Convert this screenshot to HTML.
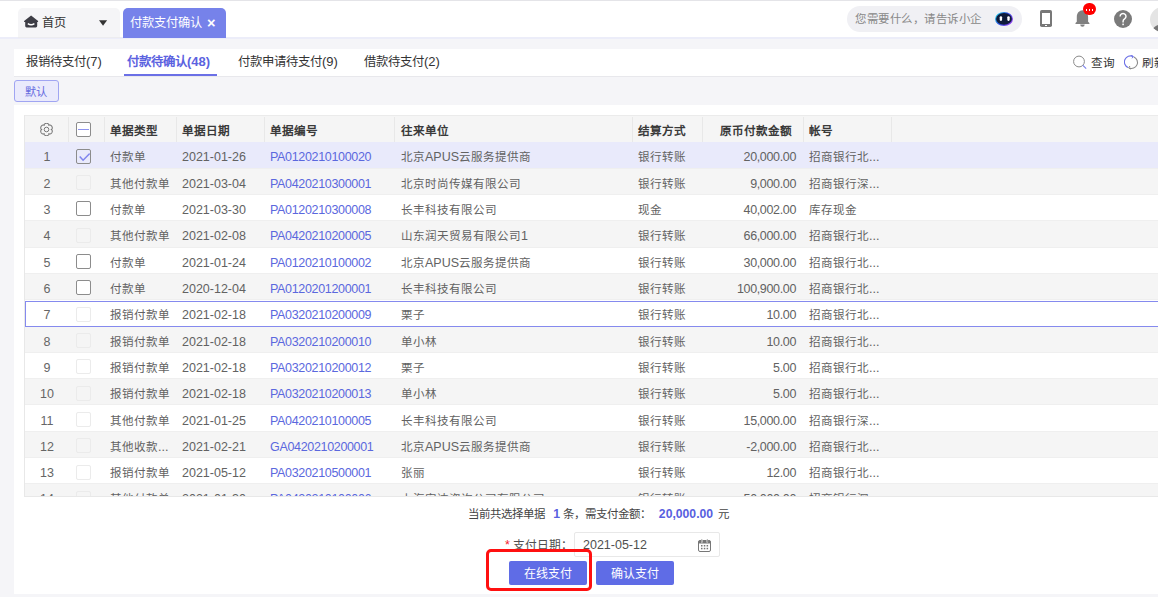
<!DOCTYPE html>
<html lang="zh-CN"><head><meta charset="utf-8">
<style>
*{box-sizing:border-box;margin:0;padding:0}
html,body{width:1158px;height:597px;overflow:hidden}
body{position:relative;background:#f5f5f8;font-family:"Liberation Sans",sans-serif;color:#333;font-size:12px}
i{font-style:normal;font-size:0.94em}
.row i{font-size:0.925em}
.th i{font-size:0.965em}
.st i{font-size:0.952em}
.abs{position:absolute}
#topline{left:0;top:0;width:1158px;height:1px;background:#e4e4e8}
#header{left:0;top:1px;width:1158px;height:37px;background:#fff}
#leftgap{left:0;top:38px;width:14px;height:559px;background:#f3f3f6}
.tab{top:8px;height:30px;border-radius:5px 5px 0 0;line-height:29px;font-size:13px;white-space:nowrap}
#tabhome{left:18px;width:102px;background:#f5f5f7;color:#333;border-bottom:1px solid #ececef}
#tabact{left:123px;width:103px;background:#7682ea;color:#fff}
#subtabs{left:14px;top:49px;width:1144px;height:28px;background:#fff;border-bottom:1px solid #e8e8ec}
.st{top:0;height:26px;line-height:26px;font-size:13px;color:#333;white-space:nowrap}
#deft{left:13.5px;top:80px;width:45.5px;height:21.5px;border:1px solid #a0a5f2;background:#eaeafc;border-radius:3px;color:#666be0;font-size:12px;line-height:20px;padding-top:1px;text-align:center}
#panel{left:14px;top:105px;width:1144px;height:489px;background:#fff}
#search{left:847px;top:6px;width:175px;height:26px;border-radius:13px;background:#f0f0f4;font-size:12.2px;letter-spacing:0.55px;color:#888;line-height:26px;padding-left:8px;white-space:nowrap}
#table{left:24px;top:115px;width:1134px;height:381.5px;overflow:hidden}
#thead{left:0;top:0;width:1134px;height:27.2px;background:#f5f5f5;border-top:1px solid #ebebeb}
.sep{top:1px;width:1px;height:25px;background:#e8e8e8}
.th{top:1.5px;height:27px;line-height:26px;font-weight:bold;color:#3a3a3a;white-space:nowrap}
.row{position:absolute;left:0;width:1200px;height:26.33px;background:#fff;border-bottom:1px solid #efefef;color:#626262;font-size:12.5px}
.row.alt{background:#f5f5f5}
.row.sel{background:#e9eafb}
.row span{position:absolute;top:2px;line-height:27px;white-space:nowrap}
.c0{left:0;width:46px;text-align:center;color:#666}
.row span.cb{left:52px;top:6.6px;width:15px;height:15px;border:1px solid #8c8c8c;border-radius:2px;background:#fff}
.row span.cb.dis{border-color:#ebebeb;background:transparent}
.row span.cb.checked{background:transparent}
.c2{left:86px}
.c3{left:158px}
.c4{left:246px;color:#5b68de;letter-spacing:-0.33px}
.c5{left:377px}
.c6{left:614px}
.c7{left:678px;width:94px;text-align:right;letter-spacing:-0.35px}
.c8{left:785px}
#summary{left:468px;top:505px;height:18px;line-height:18px;color:#444;white-space:nowrap;font-size:12.2px}
.blue{color:#5860e0;font-weight:bold}
#datelbl{left:505px;top:536px;line-height:18px;white-space:nowrap;color:#505050;font-size:12.5px}
#datein{left:574px;top:532px;width:146px;height:24.5px;border:1px solid #e8e8e8;border-radius:2px;line-height:24px;padding-left:8px;color:#505050;font-size:12.5px}
.btn{top:561px;width:78px;height:24px;background:#5f6ce6;border-radius:2px;color:#fff;text-align:center;line-height:25px;font-size:12.8px}
#redbox{left:486px;top:549px;width:106px;height:41.5px;border:3px solid #ff1010;border-radius:5px}
</style></head><body>
<div class="abs" id="topline"></div>
<div class="abs" id="header"></div>
<div class="abs" style="left:0;top:37px;width:1158px;height:2px;background:#ecedf9"></div>
<div class="abs tab" id="tabhome">
  <svg class="abs" style="left:6px;top:7px" width="15" height="13" viewBox="0 0 15 13"><path d="M7.1 0.4 L14.1 6.1 Q14.3 6.9 13.5 6.9 L13.2 6.9 L13.2 11 Q13.2 12.4 11.8 12.4 L2.6 12.4 Q1.2 12.4 1.2 11 L1.2 6.9 L0.7 6.9 Q-0.1 6.9 0.1 6.1 Z" fill="#3d3d45"/><path d="M3.8 8.6 Q7.1 10.9 10.4 8.6" stroke="#fff" stroke-width="1.3" fill="none"/></svg>
  <span class="abs" style="left:24px;top:0"><i>首页</i></span>
  <svg class="abs" style="left:81px;top:12px" width="9" height="6" viewBox="0 0 10 6"><path d="M0 0 L9 0 L4.5 6 Z" fill="#333"/></svg>
</div>
<div class="abs tab" id="tabact"><span class="abs" style="left:7px;top:0"><i>付款支付确认</i></span><span class="abs" style="left:84px;top:1px;font-size:14.5px;font-weight:bold">×</span></div>
<div class="abs" id="search"><i>您需要什么，请告诉小企</i></div>
<svg class="abs" style="left:994px;top:11px" width="20" height="16" viewBox="0 0 20 16"><defs><linearGradient id="rg" x1="0" y1="0.2" x2="1" y2="0.8"><stop offset="0" stop-color="#22d3e6"/><stop offset="0.45" stop-color="#2a4ee0"/><stop offset="1" stop-color="#9b3ef0"/></linearGradient></defs><ellipse cx="10" cy="8" rx="9.2" ry="7.2" fill="#fff" opacity="0.7"/><ellipse cx="10" cy="8" rx="9" ry="7" fill="url(#rg)"/><ellipse cx="10" cy="7.9" rx="7.9" ry="5.9" fill="#0e1a3a"/><rect x="5.7" y="5.2" width="2.4" height="4.7" rx="1.1" fill="#fff"/><rect x="13.3" y="5.2" width="2.4" height="4.7" rx="1.1" fill="#fff"/></svg>
<div class="abs" style="left:1040px;top:10px;width:12px;height:17px;background:#787878;border-radius:1.8px"><div class="abs" style="left:2px;top:3px;width:8px;height:11px;background:#fff"></div><div class="abs" style="left:5px;top:15px;width:2px;height:1px;background:#fff"></div></div>
<svg class="abs" style="left:1075px;top:9px" width="16" height="19" viewBox="0 0 16 19"><path d="M7.45 1.2 C4.5 1.6 1.8 3.5 1.8 8 L1.8 12.8 L0.5 14 L0.5 15.1 L14.4 15.1 L14.4 14 L13.1 12.8 L13.1 8 C13.1 3.5 10.4 1.6 7.45 1.2 Z" fill="#808080"/><path d="M5.2 15.4 L9.7 15.4 A2.25 2.3 0 0 1 5.2 15.4 Z" fill="#808080"/></svg>
<div class="abs" style="left:1083px;top:2.7px;width:12.8px;height:12.8px;border-radius:50%;background:#ff0000"></div>
<div class="abs" style="left:1085.5px;top:9px;width:1.6px;height:1.6px;background:#fff"></div>
<div class="abs" style="left:1088.5px;top:9px;width:1.6px;height:1.6px;background:#fff"></div>
<div class="abs" style="left:1091.5px;top:9px;width:1.6px;height:1.6px;background:#fff"></div>
<svg class="abs" style="left:1114px;top:9.6px" width="18" height="18" viewBox="0 0 18 18"><circle cx="9" cy="9" r="9" fill="#7a7a7a"/><path d="M6.1 6.4 A2.95 2.95 0 1 1 10.6 8.9 Q9.1 9.9 9.1 11.3 L9.1 12.6" fill="none" stroke="#fff" stroke-width="1.45"/><rect x="8.3" y="13.6" width="1.6" height="1.6" fill="#fff"/></svg>
<div class="abs" style="left:1150.4px;top:6.8px;width:25px;height:25px;border-radius:50%;background:#e4e4e4;overflow:hidden"><div class="abs" style="left:1px;top:16.8px;width:26px;height:18px;border-radius:50%;background:#767676"></div></div>
<div class="abs" id="subtabs">
  <div class="abs st" style="left:12px"><i>报销待支付</i>(7)</div>
  <div class="abs st" style="left:113px;color:#5b62e0;font-weight:bold"><i>付款待确认</i>(48)</div>
  <div class="abs" style="left:110px;top:25px;width:93px;height:2px;background:#6b70e6"></div>
  <div class="abs st" style="left:224px"><i>付款申请待支付</i>(9)</div>
  <div class="abs st" style="left:350px"><i>借款待支付</i>(2)</div>
</div>
<div class="abs" id="deft"><i>默认</i></div>
<div class="abs" id="panel"></div>
<div class="abs" id="table">
  <div class="abs" id="thead">
    <svg class="abs" style="left:16px;top:7px" width="13" height="13" viewBox="0 0 13 13"><path d="M6.50 0.30 L6.77 0.31 L7.04 0.35 L7.30 0.41 L7.56 0.50 L7.81 0.61 L8.04 0.74 L8.27 0.90 L8.47 1.09 L8.65 1.30 L8.81 1.55 L8.92 1.85 L8.85 2.43 L9.32 2.08 L9.63 2.02 L9.93 2.04 L10.20 2.09 L10.47 2.17 L10.72 2.28 L10.95 2.42 L11.17 2.58 L11.37 2.76 L11.56 2.96 L11.72 3.17 L11.87 3.40 L11.99 3.64 L12.10 3.89 L12.17 4.15 L12.23 4.42 L12.26 4.68 L12.26 4.96 L12.23 5.23 L12.17 5.50 L12.08 5.77 L11.94 6.02 L11.74 6.27 L11.20 6.50 L11.74 6.73 L11.94 6.98 L12.08 7.23 L12.17 7.50 L12.23 7.77 L12.26 8.04 L12.26 8.32 L12.23 8.58 L12.17 8.85 L12.10 9.11 L11.99 9.36 L11.87 9.60 L11.72 9.83 L11.56 10.04 L11.37 10.24 L11.17 10.42 L10.95 10.58 L10.72 10.72 L10.47 10.83 L10.20 10.91 L9.93 10.96 L9.63 10.98 L9.32 10.92 L8.85 10.57 L8.92 11.15 L8.81 11.45 L8.65 11.70 L8.47 11.91 L8.27 12.10 L8.04 12.26 L7.81 12.39 L7.56 12.50 L7.30 12.59 L7.04 12.65 L6.77 12.69 L6.50 12.70 L6.23 12.69 L5.96 12.65 L5.70 12.59 L5.44 12.50 L5.19 12.39 L4.96 12.26 L4.73 12.10 L4.53 11.91 L4.35 11.70 L4.19 11.45 L4.08 11.15 L4.15 10.57 L3.68 10.92 L3.37 10.98 L3.07 10.96 L2.80 10.91 L2.53 10.83 L2.28 10.72 L2.05 10.58 L1.83 10.42 L1.63 10.24 L1.44 10.04 L1.28 9.83 L1.13 9.60 L1.01 9.36 L0.90 9.11 L0.83 8.85 L0.77 8.58 L0.74 8.32 L0.74 8.04 L0.77 7.77 L0.83 7.50 L0.92 7.23 L1.06 6.98 L1.26 6.73 L1.80 6.50 L1.26 6.27 L1.06 6.02 L0.92 5.77 L0.83 5.50 L0.77 5.23 L0.74 4.96 L0.74 4.68 L0.77 4.42 L0.83 4.15 L0.90 3.89 L1.01 3.64 L1.13 3.40 L1.28 3.17 L1.44 2.96 L1.63 2.76 L1.83 2.58 L2.05 2.42 L2.28 2.28 L2.53 2.17 L2.80 2.09 L3.07 2.04 L3.37 2.02 L3.68 2.08 L4.15 2.43 L4.08 1.85 L4.19 1.55 L4.35 1.30 L4.53 1.09 L4.73 0.90 L4.96 0.74 L5.19 0.61 L5.44 0.50 L5.70 0.41 L5.96 0.35 L6.23 0.31 L6.50 0.30Z" fill="none" stroke="#777" stroke-width="1.05" stroke-linejoin="round"/><circle cx="6.5" cy="6.5" r="2.3" fill="none" stroke="#777" stroke-width="1"/></svg>
    <div class="abs sep" style="left:44px"></div>
    <div class="abs" style="left:52px;top:6px;width:15px;height:15px;border:1px solid #8c8c8c;border-radius:2px;background:#fff"><div class="abs" style="left:1px;top:5.5px;width:11px;height:1.6px;background:#8e93ef"></div></div>
    <div class="abs sep" style="left:79.6px"></div>
    <div class="abs th" style="left:86px"><i>单据类型</i></div>
    <div class="abs sep" style="left:151.6px"></div>
    <div class="abs th" style="left:158px"><i>单据日期</i></div>
    <div class="abs sep" style="left:239.7px"></div>
    <div class="abs th" style="left:246px"><i>单据编号</i></div>
    <div class="abs sep" style="left:370.4px"></div>
    <div class="abs th" style="left:377px"><i>往来单位</i></div>
    <div class="abs sep" style="left:607.5px"></div>
    <div class="abs th" style="left:614px"><i>结算方式</i></div>
    <div class="abs sep" style="left:677.6px"></div>
    <div class="abs th" style="left:678px;width:90px;text-align:right"><i>原币付款金额</i></div>
    <div class="abs sep" style="left:778.6px"></div>
    <div class="abs th" style="left:785px"><i>帐号</i></div>
    <div class="abs sep" style="left:866.7px"></div>
  </div>
<div class="row sel" style="top:27.20px"><span class="c0">1</span><span class="cb checked"><svg class="abs" style="left:1px;top:2px" width="12" height="10" viewBox="0 0 12 10"><path d="M1.7 4.4 L5.1 8.2 L11.7 1.6" fill="none" stroke="#7f85ee" stroke-width="1.5"/></svg></span><span class="c2"><i>付款单</i></span><span class="c3">2021-01-26</span><span class="c4">PA0120210100020</span><span class="c5"><i>北京</i>APUS<i>云服务提供商</i></span><span class="c6"><i>银行转账</i></span><span class="c7">20,000.00</span><span class="c8"><i>招商银行北</i>...</span></div>
<div class="row alt" style="top:53.53px"><span class="c0">2</span><span class="cb dis"></span><span class="c2"><i>其他付款单</i></span><span class="c3">2021-03-04</span><span class="c4">PA0420210300001</span><span class="c5"><i>北京时尚传媒有限公司</i></span><span class="c6"><i>银行转账</i></span><span class="c7">9,000.00</span><span class="c8"><i>招商银行深</i>...</span></div>
<div class="row" style="top:79.86px"><span class="c0">3</span><span class="cb en"></span><span class="c2"><i>付款单</i></span><span class="c3">2021-03-30</span><span class="c4">PA0120210300008</span><span class="c5"><i>长丰科技有限公司</i></span><span class="c6"><i>现金</i></span><span class="c7">40,002.00</span><span class="c8"><i>库存现金</i></span></div>
<div class="row alt" style="top:106.19px"><span class="c0">4</span><span class="cb dis"></span><span class="c2"><i>其他付款单</i></span><span class="c3">2021-02-08</span><span class="c4">PA0420210200005</span><span class="c5"><i>山东润天贸易有限公司</i>1</span><span class="c6"><i>银行转账</i></span><span class="c7">66,000.00</span><span class="c8"><i>招商银行北</i>...</span></div>
<div class="row" style="top:132.52px"><span class="c0">5</span><span class="cb en"></span><span class="c2"><i>付款单</i></span><span class="c3">2021-01-24</span><span class="c4">PA0120210100002</span><span class="c5"><i>北京</i>APUS<i>云服务提供商</i></span><span class="c6"><i>银行转账</i></span><span class="c7">30,000.00</span><span class="c8"><i>招商银行北</i>...</span></div>
<div class="row alt" style="top:158.85px"><span class="c0">6</span><span class="cb en"></span><span class="c2"><i>付款单</i></span><span class="c3">2020-12-04</span><span class="c4">PA0120201200001</span><span class="c5"><i>长丰科技有限公司</i></span><span class="c6"><i>银行转账</i></span><span class="c7">100,900.00</span><span class="c8"><i>招商银行北</i>...</span></div>
<div class="row hov" style="top:185.18px"><span class="c0">7</span><span class="cb dis"></span><span class="c2"><i>报销付款单</i></span><span class="c3">2021-02-18</span><span class="c4">PA0320210200009</span><span class="c5"><i>栗子</i></span><span class="c6"><i>银行转账</i></span><span class="c7">10.00</span><span class="c8"><i>招商银行北</i>...</span></div>
<div class="row alt" style="top:211.51px"><span class="c0">8</span><span class="cb dis"></span><span class="c2"><i>报销付款单</i></span><span class="c3">2021-02-18</span><span class="c4">PA0320210200010</span><span class="c5"><i>单小林</i></span><span class="c6"><i>银行转账</i></span><span class="c7">10.00</span><span class="c8"><i>招商银行北</i>...</span></div>
<div class="row" style="top:237.84px"><span class="c0">9</span><span class="cb dis"></span><span class="c2"><i>报销付款单</i></span><span class="c3">2021-02-18</span><span class="c4">PA0320210200012</span><span class="c5"><i>栗子</i></span><span class="c6"><i>银行转账</i></span><span class="c7">5.00</span><span class="c8"><i>招商银行北</i>...</span></div>
<div class="row alt" style="top:264.17px"><span class="c0">10</span><span class="cb dis"></span><span class="c2"><i>报销付款单</i></span><span class="c3">2021-02-18</span><span class="c4">PA0320210200013</span><span class="c5"><i>单小林</i></span><span class="c6"><i>银行转账</i></span><span class="c7">5.00</span><span class="c8"><i>招商银行北</i>...</span></div>
<div class="row" style="top:290.50px"><span class="c0">11</span><span class="cb dis"></span><span class="c2"><i>其他付款单</i></span><span class="c3">2021-01-25</span><span class="c4">PA0420210100005</span><span class="c5"><i>长丰科技有限公司</i></span><span class="c6"><i>银行转账</i></span><span class="c7">15,000.00</span><span class="c8"><i>招商银行深</i>...</span></div>
<div class="row alt" style="top:316.83px"><span class="c0">12</span><span class="cb dis"></span><span class="c2"><i>其他收款</i>...</span><span class="c3">2021-02-21</span><span class="c4">GA0420210200001</span><span class="c5"><i>北京</i>APUS<i>云服务提供商</i></span><span class="c6"><i>银行转账</i></span><span class="c7">-2,000.00</span><span class="c8"><i>招商银行北</i>...</span></div>
<div class="row" style="top:343.16px"><span class="c0">13</span><span class="cb dis"></span><span class="c2"><i>报销付款单</i></span><span class="c3">2021-05-12</span><span class="c4">PA0320210500001</span><span class="c5"><i>张丽</i></span><span class="c6"><i>银行转账</i></span><span class="c7">12.00</span><span class="c8"><i>招商银行北</i>...</span></div>
<div class="row alt" style="top:369.49px"><span class="c0">14</span><span class="cb dis"></span><span class="c2"><i>其他付款单</i></span><span class="c3">2021-01-30</span><span class="c4">PA0420210100006</span><span class="c5"><i>上海安达咨询公司有限公司</i></span><span class="c6"><i>银行转账</i></span><span class="c7">50,000.00</span><span class="c8"><i>招商银行深</i>...</span></div>
  <div class="abs" style="left:0;top:0;width:1px;height:381.5px;background:#e8e8e8"></div>
  <div class="abs" style="left:0;top:380.5px;width:1134px;height:1px;background:#e8e8e8"></div>
  <div class="abs" style="left:1px;top:186.2px;width:1200px;height:25.9px;border:1px solid #858aee"></div>
</div>
<div class="abs" id="summary"><i>当前共选择单据</i><span style="display:inline-block;width:8.2px"></span><span class="blue">1</span> <i>条，需支付金额：</i><span style="display:inline-block;width:7.5px"></span><span class="blue">20,000.00</span><span style="display:inline-block;width:5.4px"></span><i>元</i></div>
<div class="abs" id="datelbl"><span style="color:#f5222d">*</span> <i>支付日期：</i></div>
<div class="abs" id="datein">2021-05-12
  <svg class="abs" style="left:123px;top:6px" width="14" height="14" viewBox="0 0 14 14"><rect x="0.5" y="1.5" width="12" height="11" rx="1.5" fill="none" stroke="#777" stroke-width="1"/><rect x="0.5" y="1.5" width="12" height="3" rx="1" fill="#777"/><rect x="3" y="0" width="1.6" height="3.5" fill="#fff"/><rect x="8.5" y="0" width="1.6" height="3.5" fill="#fff"/><rect x="3.3" y="0.3" width="1" height="3" fill="#888"/><rect x="8.8" y="0.3" width="1" height="3" fill="#888"/><g fill="#777"><rect x="3" y="6" width="1.5" height="1.5"/><rect x="5.8" y="6" width="1.5" height="1.5"/><rect x="8.6" y="6" width="1.5" height="1.5"/><rect x="3" y="8.8" width="1.5" height="1.5"/><rect x="5.8" y="8.8" width="1.5" height="1.5"/><rect x="8.6" y="8.8" width="1.5" height="1.5"/></g></svg>
</div>
<div class="abs btn" style="left:508.5px"><i>在线支付</i></div>
<div class="abs btn" style="left:596px"><i>确认支付</i></div>
<div class="abs" id="redbox"></div>
<div class="abs" style="left:1070px;top:53px;font-size:12.4px;color:#333;white-space:nowrap">
  <svg class="abs" style="left:2px;top:2px" width="16" height="16" viewBox="0 0 16 16"><circle cx="7" cy="6.5" r="5.4" fill="none" stroke="#8a8a8a" stroke-width="1"/><path d="M10.9 10.4 L14.2 13.7" stroke="#7b80ec" stroke-width="1.1"/></svg>
  <span class="abs" style="left:20.5px;top:0"><i>查询</i></span>
  <svg class="abs" style="left:54px;top:2px" width="16" height="16" viewBox="0 0 16 16"><path d="M9 1.4 A5.8 5.8 0 0 0 4.1 12.6" fill="none" stroke="#6b70e6" stroke-width="1.1"/><path d="M7.2 0.3 L9.4 1.5 L8 3.3" fill="none" stroke="#6b70e6" stroke-width="1"/><path d="M5 12.9 A5.8 5.8 0 0 0 9.9 1.9" fill="none" stroke="#8a8a8a" stroke-width="1.1"/><path d="M6.8 14.1 L4.6 12.8 L6 11" fill="none" stroke="#8a8a8a" stroke-width="1"/></svg>
  <span class="abs" style="left:71.5px;top:0"><i>刷新</i></span>
</div>
</body></html>
